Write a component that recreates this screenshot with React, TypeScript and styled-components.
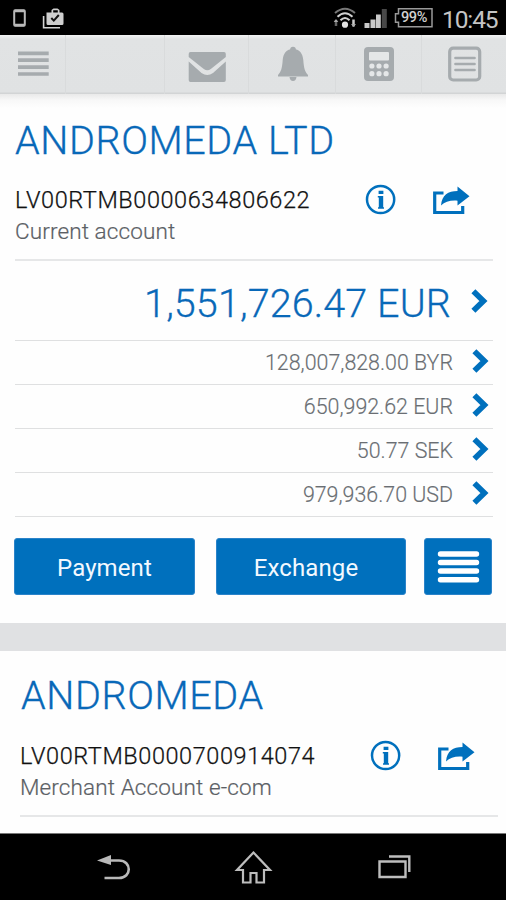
import React from "react";
import styled, { createGlobalStyle } from "styled-components";

const BLUE = "#0070bd";
const TEXT_BLUE = "#0868b8";
const ICON_GREY = "#a6abae";

const GlobalStyle = createGlobalStyle`
  * { box-sizing: border-box; }
  body { margin: 0; background: #fff; font-family: Roboto, "Liberation Sans", sans-serif; }
`;

const Screen = styled.div`
  width: 506px;
  height: 900px;
  display: flex;
  flex-direction: column;
  overflow: hidden;
  background: #fefefe;
`;

const StatusBar = styled.header`
  height: 35px;
  flex: none;
  display: flex;
  align-items: flex-start;
  justify-content: space-between;
  background: #000;
`;

const StatusGroup = styled.div`
  display: flex;
  height: 35px;
`;

const Clock = styled.span`
  width: 73px;
  padding-left: 9px;
  color: #c4c4c4;
  font-size: 24.5px;
  line-height: 39px;
  letter-spacing: -1.1px;
  white-space: nowrap;
`;

const Battery = styled.div`
  display: grid;
  width: 40px;
  height: 35px;

  > * { grid-area: 1 / 1; }
`;

const BatteryLevel = styled.span`
  padding-left: 8px;
  color: #d0d0d0;
  font-size: 14.5px;
  font-weight: 500;
  line-height: 36px;
  letter-spacing: -0.4px;
`;

const Toolbar = styled.nav`
  height: 59px;
  flex: none;
  display: flex;
  background: linear-gradient(#f2f3f4 0, #e1e3e4 4px, #e0e2e3 57px, #d2d4d5 58px);
`;

const Tool = styled.div<{ $width: number }>`
  width: ${(p) => p.$width}px;
  border-right: 1px solid #d9dbdc;
  display: flex;

  &:last-child { border-right: 0; }
`;

const ToolbarShadow = styled.div`
  height: 14px;
  flex: none;
  background: linear-gradient(#e9e9e9, #f8f8f8 45%, #fefefe);
`;

const Content = styled.main`
  flex: 1;
  min-height: 0;
  overflow: hidden;
`;

const Card = styled.section<{ $left: number; $right: number }>`
  padding: 0 ${(p) => p.$right}px 0 ${(p) => p.$left}px;
`;

const Holder = styled.h1<{ $top: number; $indent: number; $height: number }>`
  margin: 0;
  padding: ${(p) => p.$top}px 0 0 ${(p) => p.$indent}px;
  height: ${(p) => p.$height}px;
  color: ${TEXT_BLUE};
  font-size: 39.5px;
  font-weight: 300;
  line-height: 65px;
  letter-spacing: 0.6px;
  white-space: nowrap;
  -webkit-text-stroke: 0.3px ${TEXT_BLUE};
`;

const AccountRow = styled.div`
  display: flex;
  justify-content: space-between;
  height: 86px;
  border-bottom: 2px solid #e6e7e8;
`;

const AccountText = styled.div`
  white-space: nowrap;
`;

const Iban = styled.div`
  padding-top: 10px;
  color: #111;
  font-size: 23.5px;
  font-weight: 300;
  line-height: 30px;
  letter-spacing: 0.57px;
  -webkit-text-stroke: 0.25px #111;
`;

const AccountKind = styled.div`
  color: #5b6065;
  font-size: 22.5px;
  font-weight: 300;
  line-height: 32px;
  letter-spacing: 0.12px;
  -webkit-text-stroke: 0.2px #5b6065;
`;

const AccountActions = styled.div`
  display: flex;
  gap: 22px;
  padding: 3px 23px 0 0;
`;

const BalanceRow = styled.div<{ $main?: boolean }>`
  height: ${(p) => (p.$main ? 80 : 44)}px;
  display: flex;
  align-items: center;
  justify-content: flex-end;
  gap: ${(p) => (p.$main ? 19 : 18)}px;
  padding: ${(p) => (p.$main ? "3px 4px 0 0" : "0 3px 2px 0")};
  border-bottom: 1.5px solid #dfe0e1;
`;

const Amount = styled.span<{ $main?: boolean }>`
  color: ${(p) => (p.$main ? TEXT_BLUE : "#6a6e73")};
  font-size: ${(p) => (p.$main ? 39.5 : 21.4)}px;
  font-weight: 300;
  line-height: 40px;
  padding-top: 3px;
  letter-spacing: ${(p) => (p.$main ? 0.12 : 0)}px;
  -webkit-text-stroke: ${(p) => (p.$main ? 0.3 : 0.15)}px currentColor;
  white-space: nowrap;
`;

const Buttons = styled.div`
  display: grid;
  grid-template-columns: 181px 21px 190px 18px 68px;
  margin-left: -1px;
  padding-top: 21px;
  height: 106px;
`;

const ActionButton = styled.button<{ $column: number; $shift?: number }>`
  grid-column: ${(p) => p.$column};
  height: 57px;
  border: 1px solid #2b83c9;
  border-radius: 3px;
  padding: 2px 0 0;
  text-indent: ${(p) => p.$shift ?? 0}px;
  background: ${BLUE};
  color: #f3f9ff;
  font-family: inherit;
  font-size: 24px;
  font-weight: 400;
  letter-spacing: 0.1px;
  display: flex;
  align-items: center;
  justify-content: center;
`;

const Divider = styled.div`
  height: 28px;
  background: #e0e1e3;
`;

const NavBar = styled.footer`
  height: 67px;
  flex: none;
  display: flex;
  justify-content: center;
  padding-left: 2px;
  background: #000;
  border-top: 1px solid #777;
`;

const NavItem = styled.div`
  width: 140px;
  display: flex;
  justify-content: center;
`;

const Icon = styled.svg`
  display: block;
  flex: none;
`;

function PhoneStatus() {
  return (
    <Icon width="74" height="35" viewBox="0 0 74 35">
      <rect x="14.200" y="10.200" width="10.600" height="15.600" rx="1" fill="none" stroke="#b9b9b9" strokeWidth="2" />
      <path d="M14.500 11h10M14.500 25h10" stroke="#b9b9b9" strokeWidth="2.400" />
      <path d="M43.600 16v11.800H60" fill="none" stroke="#d5d5d5" strokeWidth="1.600" />
      <path d="M46.500 12.500h5V10l2-1.600h4L59.500 10v2.500H62q1.500 0 1.500 1.500v9.500q0 1.500-1.500 1.500H48q-1.500 0-1.500-1.500V12.500zM53.200 10.300v2.200h4.600v-2.200z" fill="#cfcfcf" fillRule="evenodd" />
      <path d="m51.300 18 2.500 2.600 5-5.600" fill="none" stroke="#111" strokeWidth="2" />
    </Icon>
  );
}

function SignalStatus() {
  return (
    <Icon width="60" height="35" viewBox="333 0 60 35">
      <g fill="none">
        <path d="M335 13q10-8.500 20 0" stroke="#777" strokeWidth="2" />
        <path d="M337.500 16.800q7.500-7 15 0M340.500 20.300q4.500-4.500 9 0" stroke="#d2d2d2" strokeWidth="2" />
        <path d="M336 20v6" stroke="#666" strokeWidth="2.500" />
        <path d="M353.500 19.500v7" stroke="#ccc" strokeWidth="2.500" />
      </g>
      <circle cx="345" cy="24.700" r="3.100" fill="#e2e2e2" />
      <path d="m351 24 2.500 3 2.500-3zM333.700 22l2.300-3 2.300 3z" fill="#aaa" />
      <g fill="#c9c9c9">
        <rect x="364.500" y="23" width="5" height="5" />
        <rect x="370.500" y="19.500" width="5" height="8.500" />
        <rect x="376" y="14.500" width="4.800" height="13.500" />
      </g>
      <rect x="381.800" y="9" width="5" height="19" fill="#484848" />
    </Icon>
  );
}

function BatteryIcon() {
  return (
    <Icon width="40" height="35" viewBox="393 0 40 35">
      <path d="M398.500 8.800h33.500v18h-33.500v-4.500h-3v-8.500h3z" fill="none" stroke="#999" strokeWidth="1.500" />
    </Icon>
  );
}

function MenuIcon() {
  return (
    <Icon width="65" height="58" viewBox="0 35 65 58">
      <path d="M18 53.300h30.700M18 60.200h30.700M18 67.100h30.700M18 74h30.700" stroke={ICON_GREY} strokeWidth="3.700" />
    </Icon>
  );
}

function MailIcon() {
  return (
    <Icon width="82" height="58" viewBox="165 35 82 58">
      <path d="M190.500 52h33.500q1.800 0 1.800 2v3l-15 12q-3.500 2.500-7 0L188.700 57V54q0-2 1.800-2z" fill={ICON_GREY} />
      <path d="M188.700 61.500 201.500 73q5.800 4 11.500 0l12.800-11.500V80q0 2-1.800 2h-33.500q-1.800 0-1.800-2z" fill={ICON_GREY} />
    </Icon>
  );
}

function BellIcon() {
  return (
    <Icon width="86" height="58" viewBox="249 35 86 58">
      <circle cx="293" cy="49.500" r="2.800" fill={ICON_GREY} />
      <path d="M293 49c6.500 0 9.800 4.500 10.300 11 .5 8 1.700 12 4.700 15v1.500h-30V75c3-3 4.200-7 4.700-15 .5-6.500 3.800-11 10.300-11z" fill={ICON_GREY} />
      <path d="M289.500 77h7q-.5 4-3.500 4t-3.500-4z" fill={ICON_GREY} />
    </Icon>
  );
}

function CalculatorIcon() {
  return (
    <Icon width="85" height="58" viewBox="336 35 85 58">
      <rect x="364" y="47" width="30" height="34" rx="4" fill={ICON_GREY} />
      <rect x="369" y="52" width="20" height="8.500" rx="1" fill="#e5e7e8" />
      <g fill="#e5e7e8">
        {[66, 73.7].map((y) =>
          [371.9, 379, 386.1].map((x) => <circle key={`${x}-${y}`} cx={x} cy={y} r="2.600" />)
        )}
      </g>
    </Icon>
  );
}

function ListIcon() {
  return (
    <Icon width="84" height="58" viewBox="422 35 84 58">
      <rect x="449.700" y="48.200" width="30" height="31.800" rx="3.500" fill="none" stroke={ICON_GREY} strokeWidth="3.200" />
      <path d="M455.500 58h19M455.500 64h19M455.500 70h19" stroke={ICON_GREY} strokeWidth="2.700" strokeLinecap="round" />
    </Icon>
  );
}

function InfoIcon() {
  return (
    <Icon width="40" height="44" viewBox="360 178 40 44">
      <circle cx="380.600" cy="199.500" r="13.600" fill="none" stroke={BLUE} strokeWidth="2.500" />
      <path d="M378.600 190.700h4.800v3.200h-4.800zM377.800 196h5.400v11.200h.8v1.600h-6v-1.600h.8v-9.600h-1z" fill={BLUE} />
    </Icon>
  );
}

function ShareIcon() {
  return (
    <Icon width="48" height="44" viewBox="422 178 48 44">
      <path d="M443.500 193h-8.800v19.500h28v-6.500" fill="none" stroke={BLUE} strokeWidth="3.200" />
      <path d="M441 205.500c1-10.500 7-14.500 16.500-14.500v-4.500l12 9.700-12 9.300v-4.800c-7-.5-12.500.7-16.500 4.800z" fill={BLUE} />
    </Icon>
  );
}

function Chevron() {
  return (
    <Icon width="19" height="26" viewBox="0 0 19 26">
      <path d="m3.400 2.300 10 9.700-10 9.700" fill="none" stroke={BLUE} strokeWidth="5.700" />
    </Icon>
  );
}

function ButtonListIcon() {
  return (
    <Icon width="44" height="34" viewBox="0 0 44 34">
      <path d="M4.500 3h36M4.500 11.500h36M4.500 20h36M4.500 28.700h36" stroke="#fff" strokeWidth="5.400" strokeLinecap="round" />
    </Icon>
  );
}

function BackIcon() {
  return (
    <Icon width="40" height="66" viewBox="94 834 40 66">
      <path d="M108 860.500h11c13 0 13 17.500 0 17.500h-14.500" fill="none" stroke="#b9b9b9" strokeWidth="2.600" />
      <path d="m97 860.500 14-5.500v10z" fill="#b9b9b9" />
    </Icon>
  );
}

function HomeIcon() {
  return (
    <Icon width="40" height="66" viewBox="234 834 40 66">
      <path d="m253.500 852.500-16.500 17.500h6v12.500h7.500v-9.500h6v9.500h7.500v-12.500h6z" fill="none" stroke="#bdbdbd" strokeWidth="2.200" />
    </Icon>
  );
}

function RecentIcon() {
  return (
    <Icon width="40" height="66" viewBox="374 834 40 66">
      <path d="M379.500 861.500h26v15.500h-26zM389 856.500h20.300V872" fill="none" stroke="#bdbdbd" strokeWidth="2.400" />
    </Icon>
  );
}

function Account({ iban, kind }: { iban: string; kind: string }) {
  return (
    <AccountRow>
      <AccountText>
        <Iban>{iban}</Iban>
        <AccountKind>{kind}</AccountKind>
      </AccountText>
      <AccountActions>
        <InfoIcon />
        <ShareIcon />
      </AccountActions>
    </AccountRow>
  );
}

const balances = ["128,007,828.00 BYR", "650,992.62 EUR", "50.77 SEK", "979,936.70 USD"];

export default function App() {
  return (
    <>
      <GlobalStyle />
      <Screen>
        <StatusBar>
          <PhoneStatus />
          <StatusGroup>
            <SignalStatus />
            <Battery>
              <BatteryIcon />
              <BatteryLevel>99%</BatteryLevel>
            </Battery>
            <Clock>10:45</Clock>
          </StatusGroup>
        </StatusBar>
        <Toolbar>
          <Tool $width={66}><MenuIcon /></Tool>
          <Tool $width={99} />
          <Tool $width={84}><MailIcon /></Tool>
          <Tool $width={87}><BellIcon /></Tool>
          <Tool $width={86}><CalculatorIcon /></Tool>
          <Tool $width={84}><ListIcon /></Tool>
        </Toolbar>
        <ToolbarShadow />
        <Content>
          <Card $left={15} $right={13}>
            <Holder $top={0} $indent={0} $height={67}>ANDROMEDA LTD</Holder>
            <Account iban="LV00RTMB0000634806622" kind="Current account" />
            <BalanceRow $main>
              <Amount $main>1,551,726.47 EUR</Amount>
              <Chevron />
            </BalanceRow>
            {balances.map((amount) => (
              <BalanceRow key={amount}>
                <Amount>{amount}</Amount>
                <Chevron />
              </BalanceRow>
            ))}
            <Buttons>
              <ActionButton $column={1}>Payment</ActionButton>
              <ActionButton $column={3} $shift={-10}>Exchange</ActionButton>
              <ActionButton $column={5} aria-label="More actions"><ButtonListIcon /></ActionButton>
            </Buttons>
          </Card>
          <Divider />
          <Card $left={20} $right={8}>
            <Holder $top={12} $indent={1} $height={80}>ANDROMEDA</Holder>
            <Account iban="LV00RTMB0000700914074" kind="Merchant Account e-com" />
          </Card>
        </Content>
        <NavBar>
          <NavItem><BackIcon /></NavItem>
          <NavItem><HomeIcon /></NavItem>
          <NavItem><RecentIcon /></NavItem>
        </NavBar>
      </Screen>
    </>
  );
}
